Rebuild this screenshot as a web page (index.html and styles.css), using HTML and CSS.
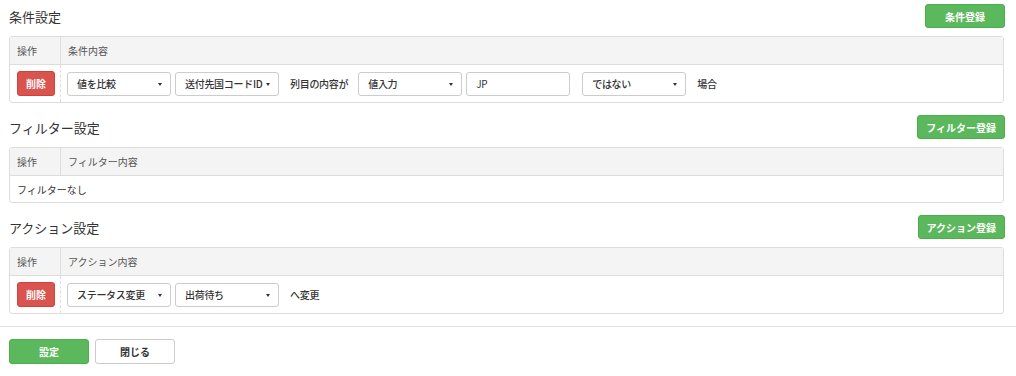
FILE: index.html
```html
<!DOCTYPE html>
<html lang="ja">
<head>
  <meta charset="UTF-8">
  <title>条件設定</title>
  <link rel="stylesheet" href="styles.css">
</head>
<body>

  <div class="content">

    <!-- 条件 -->
    <section class="block first">
      <div class="block-head">
        <h2>条件設定</h2>
        <button class="btn btn-green btn-add">条件登録</button>
      </div>
      <div class="grid">
        <div class="grid-head">
          <div class="col-op">操作</div>
          <div class="col-main">条件内容</div>
        </div>
        <div class="grid-row">
          <div class="col-op"><button class="btn btn-red">削除</button></div>
          <div class="col-main">
            <div class="select">値を比較</div>
            <div class="select">送付先国コードID</div>
            <span class="label">列目の内容が</span>
            <div class="select">値入力</div>
            <div class="input">JP</div>
            <div class="select wide-gap">ではない</div>
            <span class="label">場合</span>
          </div>
        </div>
      </div>
    </section>

    <!-- フィルター -->
    <section class="block">
      <div class="block-head">
        <h2>フィルター設定</h2>
        <button class="btn btn-green btn-add">フィルター登録</button>
      </div>
      <div class="grid">
        <div class="grid-head">
          <div class="col-op">操作</div>
          <div class="col-main">フィルター内容</div>
        </div>
        <div class="grid-row empty">フィルターなし</div>
      </div>
    </section>

    <!-- アクション -->
    <section class="block">
      <div class="block-head">
        <h2>アクション設定</h2>
        <button class="btn btn-green btn-add">アクション登録</button>
      </div>
      <div class="grid">
        <div class="grid-head">
          <div class="col-op">操作</div>
          <div class="col-main">アクション内容</div>
        </div>
        <div class="grid-row">
          <div class="col-op"><button class="btn btn-red">削除</button></div>
          <div class="col-main">
            <div class="select">ステータス変更</div>
            <div class="select">出荷待ち</div>
            <span class="label">へ変更</span>
          </div>
        </div>
      </div>
    </section>

  </div>

  <div class="footer">
    <button class="btn btn-green btn-foot">設定</button>
    <button class="btn btn-white btn-foot">閉じる</button>
  </div>

</body>
</html>
```

FILE: styles.css
```css
/* 全体 */
body {
  margin: 0;
  font-family: "Noto Sans CJK JP", "Noto Sans", sans-serif;
  font-size: 10px;
  color: #333;
  background: #fff;
}

.content {
  padding: 0 11px 12px 9px;
  border-bottom: 1px solid #e2e2e2;
}

/* セクション */
.block {
  margin-top: 12px;
}

.block.first {
  margin-top: 4px;
}

.block-head {
  display: flex;
  justify-content: space-between;
  align-items: center;
  height: 24px;
  margin-bottom: 8px;
}

.block-head h2 {
  margin: 0;
  font-size: 13px;
  font-weight: 400;
  color: #333;
}

/* ボタン */
.btn {
  font-family: inherit;
  font-size: 10px;
  font-weight: 700;
  border-radius: 3px;
  border: 1px solid transparent;
  cursor: pointer;
  padding: 0;
}

.btn-green {
  background: #5cb85c;
  border-color: #4cae4c;
  color: #fff;
}

.btn-red {
  background: #d9534f;
  border-color: #d43f3a;
  color: #fff;
  width: 38px;
  height: 25px;
}

.btn-white {
  background: #fff;
  border-color: #ccc;
  color: #333;
}

.btn-add {
  height: 24px;
  min-width: 80px;
  padding: 0 8px;
  font-weight: 600;
}

/* 表 */
.grid {
  border: 1px solid #ddd;
  border-radius: 3px;
  margin-right: 1px;
}

.grid-head {
  display: flex;
  height: 27px;
  background: #f4f4f4;
  border-bottom: 1px solid #ddd;
  color: #555;
}

.grid-head > div {
  display: flex;
  align-items: center;
}

.col-op {
  width: 43px;
  padding-left: 7px;
  flex-shrink: 0;
}

.grid-head .col-op {
  border-right: 1px solid #ddd;
}

.grid-head .col-main {
  padding-left: 7px;
}

.grid-row {
  display: flex;
  height: 37px;
  letter-spacing: -0.3px;
}

.grid-row > div {
  display: flex;
  align-items: center;
}

.grid-row .col-op {
  border-right: 1px dashed #ddd;
}

.grid-row .col-main {
  padding-left: 6px;
  gap: 4px;
}

.grid-row.empty {
  height: 26px;
  align-items: center;
  padding-left: 7px;
  letter-spacing: 0;
}

/* 入力 */
.select,
.input {
  box-sizing: border-box;
  width: 104px;
  height: 24px;
  border: 1px solid #ccc;
  border-radius: 3px;
  padding-left: 9px;
  display: flex;
  align-items: center;
  font-weight: 500;
  color: #333;
  background: #fff;
  white-space: nowrap;
}

.select {
  position: relative;
}

.select::after {
  content: "";
  position: absolute;
  right: 8px;
  top: 10px;
  border-left: 2px solid transparent;
  border-right: 2px solid transparent;
  border-top: 3px solid #333;
}

.input {
  font-weight: 400;
}

.wide-gap {
  margin-left: 8px;
}

.label {
  margin: 0 6px 0 7px;
  font-weight: 500;
}

/* フッター */
.footer {
  display: flex;
  gap: 6px;
  padding: 12px 9px;
}

.btn-foot {
  width: 80px;
  height: 25px;
}
```
